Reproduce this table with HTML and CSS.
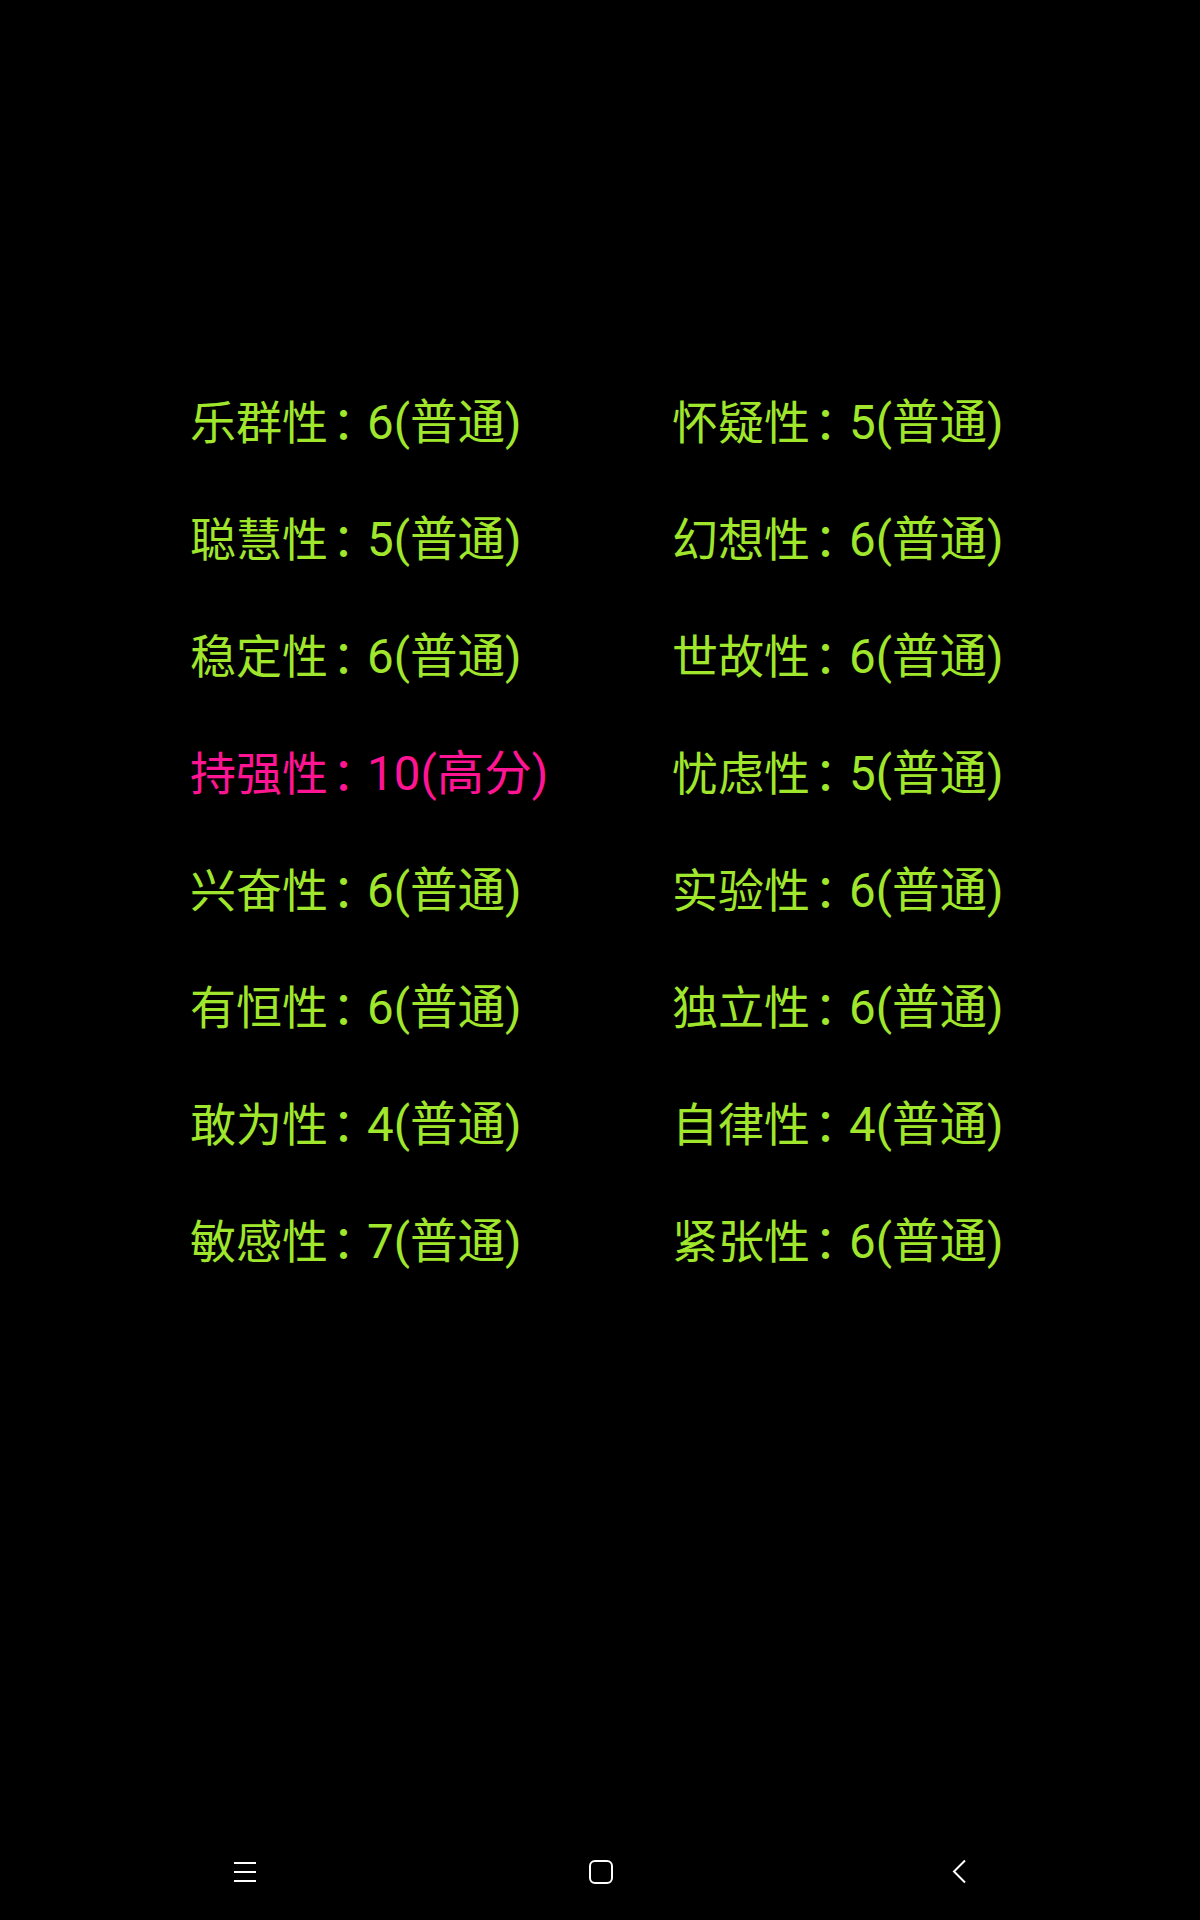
FILE: index.html
```html
<!DOCTYPE html>
<html lang="zh-CN">
<head>
<meta charset="utf-8">
<link rel="stylesheet" href="styles.css">
</head>
<body>
<div class="screen">
  <main class="content">
    <div class="grid">
      <div class="item">乐群性<span class="colon">：</span><span class="val">6(普通)</span></div>
      <div class="item">怀疑性<span class="colon">：</span><span class="val">5(普通)</span></div>
      <div class="item">聪慧性<span class="colon">：</span><span class="val">5(普通)</span></div>
      <div class="item">幻想性<span class="colon">：</span><span class="val">6(普通)</span></div>
      <div class="item">稳定性<span class="colon">：</span><span class="val">6(普通)</span></div>
      <div class="item">世故性<span class="colon">：</span><span class="val">6(普通)</span></div>
      <div class="item high">持强性<span class="colon">：</span><span class="val">10(高分)</span></div>
      <div class="item">忧虑性<span class="colon">：</span><span class="val">5(普通)</span></div>
      <div class="item">兴奋性<span class="colon">：</span><span class="val">6(普通)</span></div>
      <div class="item">实验性<span class="colon">：</span><span class="val">6(普通)</span></div>
      <div class="item">有恒性<span class="colon">：</span><span class="val">6(普通)</span></div>
      <div class="item">独立性<span class="colon">：</span><span class="val">6(普通)</span></div>
      <div class="item">敢为性<span class="colon">：</span><span class="val">4(普通)</span></div>
      <div class="item">自律性<span class="colon">：</span><span class="val">4(普通)</span></div>
      <div class="item">敏感性<span class="colon">：</span><span class="val">7(普通)</span></div>
      <div class="item">紧张性<span class="colon">：</span><span class="val">6(普通)</span></div>
    </div>
  </main>
  <nav class="navbar">
    <span class="nav-btn">
      <svg width="24" height="24" viewBox="0 0 24 24"><path d="M1 3h22M1 12h22M1 21h22" stroke="#fff" stroke-width="2" fill="none"/></svg>
    </span>
    <span class="nav-btn">
      <svg width="26" height="26" viewBox="0 0 26 26"><rect x="2" y="2" width="22" height="22" rx="5" ry="5" stroke="#fff" stroke-width="2" fill="none"/></svg>
    </span>
    <span class="nav-btn">
      <svg width="16" height="26" viewBox="0 0 16 26"><path d="M13 1.5L2 12.5L13 23.5" stroke="#fff" stroke-width="2" fill="none"/></svg>
    </span>
  </nav>
</div>
</body>
</html>
```
FILE: styles.css
```css
html, body {
  margin: 0;
  padding: 0;
  background: #000;
}
.screen {
  width: 1200px;
  height: 1920px;
  display: flex;
  flex-direction: column;
  background: #000;
}
.content {
  flex: 1;
  padding-top: 361px;
}
.grid {
  display: grid;
  grid-template-columns: 482px auto;
  padding-left: 190px;
}
.item {
  height: 117px;
  line-height: 117px;
  font-family: Roboto, "Noto Sans CJK SC", sans-serif;
  font-size: 46px;
  color: #a0e62c;
  white-space: nowrap;
}
.colon {
  margin-left: 4px;
  letter-spacing: -11px;
  font-family: "Noto Sans CJK SC", sans-serif;
}
.val {
  font-size: 47.5px;
}
.item.high {
  color: #ff1493;
}
.navbar {
  height: 96px;
  display: flex;
  align-items: center;
}
.nav-btn {
  display: flex;
  align-items: center;
  justify-content: center;
  height: 96px;
}
.nav-btn:nth-child(1) { width: 245px; justify-content: flex-end; }
.nav-btn:nth-child(1) svg { margin-right: -12px; }
.nav-btn:nth-child(2) { margin-left: 343px; width: 26px; }
.nav-btn:nth-child(3) { margin-left: 338px; width: 16px; }
```
